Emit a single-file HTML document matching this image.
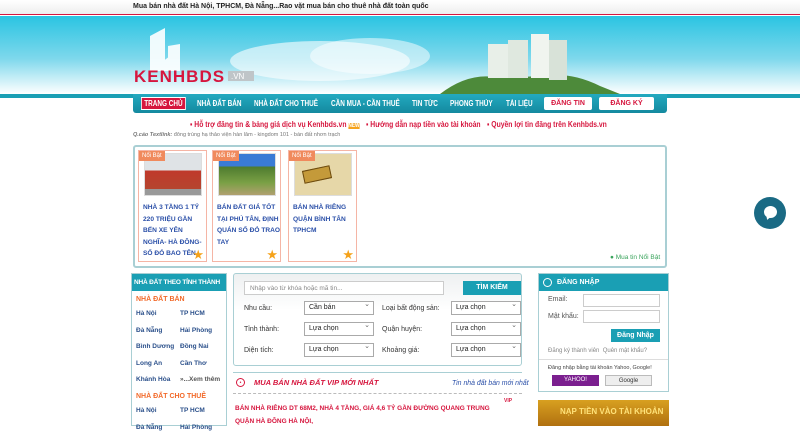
<!DOCTYPE html>
<html><head><meta charset="utf-8"><style>
*{margin:0;padding:0;box-sizing:border-box}
body{width:800px;height:426px;overflow:hidden;background:#fff;font-family:"Liberation Sans",sans-serif;position:relative}
.a{position:absolute}
.top{left:0;top:0;width:800px;height:15px;background:linear-gradient(#fff,#eee);border-bottom:1px solid #d6163e}
.top span{position:absolute;left:133px;top:3px;font-size:7px;color:#222;font-weight:bold}
.ban{left:0;top:16px;width:800px;height:78px;background:linear-gradient(#2ac4e2 0%,#7fd8ec 55%,#fff 100%)}
.line{left:0;top:94px;width:800px;height:4px;background:#1a9fb4}
.nav{left:133px;top:94px;width:534px;height:19px;background:linear-gradient(#23aac0,#14899f);border-radius:0 0 3px 3px}
.nav span{position:absolute;top:5px;font-size:8px;font-weight:bold;color:#fff;white-space:nowrap;transform:scaleX(.8);transform-origin:left}
.btn{position:absolute;top:3px;height:13px;background:#fff;border-radius:2px;color:#d6163e;font-size:7px;font-weight:bold;text-align:center;line-height:13px}
.lnk{top:119px;font-size:8.5px;color:#d6163e;font-weight:bold;white-space:nowrap;transform:scaleX(.8);transform-origin:left}
.card{position:absolute;top:150px;width:69px;height:112px;border:1px solid #f5b5a5;background:#fff}
.card .img{position:absolute;left:5px;top:2px;width:58px;height:43px;border:1px solid #ddd}
.card .tag{position:absolute;left:0;top:0;background:#f08a5d;color:#fff;font-size:6px;padding:2px 3px}
.card .t{position:absolute;left:4px;top:51px;font-size:6.6px;line-height:11.6px;color:#2a4fa8;font-weight:bold;white-space:nowrap}
.star{position:absolute;right:2px;bottom:0;color:#f5a21a;font-size:13px;line-height:13px}
.lab{font-size:7px;color:#333}
.sel{position:absolute;width:70px;height:14px;border:1px solid #aaa;background:#fff;font-size:7px;line-height:12px;padding-left:4px;color:#222}
.sel:after{content:"⌄";position:absolute;right:3px;top:-3px;color:#666;font-size:7px}
.side a{position:absolute;font-size:6.5px;color:#2a4f8a;font-weight:bold}
</style></head><body>
<div class="a top"><span>Mua bán nhà đất Hà Nội, TPHCM, Đà Nẵng...Rao vặt mua bán cho thuê nhà đất toàn quốc</span></div>
<div class="a ban">
<svg width="800" height="78" style="position:absolute;left:0;top:0">
<ellipse cx="320" cy="45" rx="90" ry="20" fill="#fff" opacity=".6"/>
<ellipse cx="370" cy="40" rx="60" ry="18" fill="#fff" opacity=".5"/>
<path d="M150 55 L150 20 L165 12 L165 55Z M168 55 L168 30 L180 28 L180 55Z M150 55 L170 40 L180 55Z" fill="#fff" opacity=".9"/>
<path d="M440 78 Q470 55 500 62 L540 60 Q570 55 600 70 L620 78Z" fill="#4d8a3a"/>
<rect x="488" y="28" width="20" height="34" fill="#e8efe8"/>
<rect x="508" y="24" width="20" height="38" fill="#dfe8df"/>
<rect x="531" y="18" width="18" height="44" fill="#f0f4ef"/>
<rect x="549" y="24" width="18" height="40" fill="#d8e2d8"/>
<text x="134" y="66" font-family="Liberation Sans" font-size="17" font-weight="bold" fill="#d6163e" letter-spacing="1">KENHBDS</text>
<rect x="228" y="55" width="26" height="10" fill="#bfc5c8"/>
<text x="231" y="63" font-family="Liberation Sans" font-size="8" fill="#fff">.VN</text>
</svg></div>
<div class="a line"></div>
<div class="a nav">
<span style="left:8px;top:3px;background:#d6163e;border:1px solid #fff;padding:1px 3px">TRANG CHỦ</span>
<span style="left:64px">NHÀ ĐẤT BÁN</span>
<span style="left:121px">NHÀ ĐẤT CHO THUÊ</span>
<span style="left:198px">CẦN MUA - CẦN THUÊ</span>
<span style="left:279px">TIN TỨC</span>
<span style="left:317px">PHONG THỦY</span>
<span style="left:373px">TÀI LIỆU</span>
<div class="btn" style="left:411px;width:48px">ĐĂNG TIN</div>
<div class="btn" style="left:466px;width:55px">ĐĂNG KÝ</div>
</div>
<div class="a lnk" style="left:190px">▪ Hỗ trợ đăng tin &amp; bảng giá dịch vụ Kenhbds.vn <span style="background:#f5a21a;color:#fff;font-size:6px">NEW</span></div>
<div class="a lnk" style="left:366px">▪ Hướng dẫn nạp tiền vào tài khoản</div>
<div class="a lnk" style="left:487px">▪ Quyền lợi tin đăng trên Kenhbds.vn</div>
<div class="a" style="left:133px;top:132px;font-size:5.5px;color:#777"><b><i>Q.cáo Textlink:</i></b> đông trùng hạ thảo viện hàn lâm - kingdom 101 - bán đất nhơn trạch</div>
<div class="a" style="left:133px;top:145px;width:534px;height:123px;border:2px solid #a9cfd4;border-radius:3px"></div>
<div class="card" style="left:138px"><div class="img" style="background:linear-gradient(#dfe3e6 40%,#c0392b 40%,#b5452f 85%,#999 85%)"></div><div class="tag">Nổi Bật</div><div class="t">NHÀ 3 TẦNG 1 TỶ<br>220 TRIỆU GẦN<br>BẾN XE YÊN<br>NGHĨA- HÀ ĐÔNG-<br>SỔ ĐỎ BAO TÊN</div><div class="star">★</div></div>
<div class="card" style="left:212px"><div class="img" style="background:linear-gradient(#3a7bd5 30%,#4d7a2e 30%,#7aa045 70%,#b0a070)"></div><div class="tag">Nổi Bật</div><div class="t">BÁN ĐẤT GIÁ TỐT<br>TẠI PHÚ TÂN, ĐỊNH<br>QUÁN SỔ ĐỎ TRAO<br>TAY</div><div class="star">★</div></div>
<div class="card" style="left:288px"><div class="img" style="background:#e6d7a8"><div style="position:absolute;left:8px;top:14px;width:28px;height:13px;background:#c49a3a;border:1px solid #6b4a10;transform:rotate(-12deg)"></div></div><div class="tag">Nổi Bật</div><div class="t">BÁN NHÀ RIÊNG<br>QUẬN BÌNH TÂN<br>TPHCM</div><div class="star">★</div></div>
<div class="a" style="left:610px;top:254px;font-size:6.5px;color:#3aa45c">● Mua tin Nổi Bật</div>
<div class="a side" style="left:131px;top:273px;width:96px;height:153px;border:1px solid #a9cfd4">
<div style="background:#1a9fb4;height:17px;color:#fff;font-size:6.5px;font-weight:bold;padding:5px 2px;white-space:nowrap;letter-spacing:-.2px">NHÀ ĐẤT THEO TỈNH THÀNH</div>
<div style="position:absolute;left:4px;top:22px;font-size:7px;color:#f26a2a;font-weight:bold">NHÀ ĐẤT BÁN</div>
<a style="left:4px;top:36px">Hà Nội</a><a style="left:48px;top:36px">TP HCM</a>
<a style="left:4px;top:53px">Đà Nẵng</a><a style="left:48px;top:53px">Hải Phòng</a>
<a style="left:4px;top:69px">Bình Dương</a><a style="left:48px;top:69px">Đồng Nai</a>
<a style="left:4px;top:86px">Long An</a><a style="left:48px;top:86px">Cần Thơ</a>
<a style="left:4px;top:102px">Khánh Hòa</a><a style="left:48px;top:102px;color:#555">»...Xem thêm</a>
<div style="position:absolute;left:4px;top:119px;font-size:7px;color:#f26a2a;font-weight:bold">NHÀ ĐẤT CHO THUÊ</div>
<a style="left:4px;top:133px">Hà Nội</a><a style="left:48px;top:133px">TP HCM</a>
<a style="left:4px;top:150px">Đà Nẵng</a><a style="left:48px;top:150px">Hải Phòng</a>
</div>
<div class="a" style="left:233px;top:273px;width:289px;height:93px;border:1px solid #a9cfd4;border-radius:3px;background:linear-gradient(#eef0f1,#fff 40%)">
<div style="position:absolute;left:10px;top:7px;width:200px;height:14px;border:1px solid #ccc;background:#fff;font-size:6.5px;color:#888;padding:3px 5px">Nhập vào từ khóa hoặc mã tin...</div>
<div style="position:absolute;left:229px;top:7px;width:58px;height:14px;background:#1a9fb4;color:#fff;font-size:7px;font-weight:bold;text-align:center;line-height:14px">TÌM KIẾM</div>
<div class="a lab" style="left:10px;top:31px">Nhu cầu:</div><div class="sel" style="left:70px;top:27px">Cần bán</div>
<div class="a lab" style="left:148px;top:31px">Loại bất động sản:</div><div class="sel" style="left:217px;top:27px">Lựa chọn</div>
<div class="a lab" style="left:10px;top:52px">Tỉnh thành:</div><div class="sel" style="left:70px;top:48px">Lựa chọn</div>
<div class="a lab" style="left:148px;top:52px">Quận huyện:</div><div class="sel" style="left:217px;top:48px">Lựa chọn</div>
<div class="a lab" style="left:10px;top:73px">Diện tích:</div><div class="sel" style="left:70px;top:69px">Lựa chọn</div>
<div class="a lab" style="left:148px;top:73px">Khoảng giá:</div><div class="sel" style="left:217px;top:69px">Lựa chọn</div>
</div>
<div class="a" style="left:233px;top:372px;width:289px;border-top:1px solid #a9cfd4"></div>
<div class="a" style="left:236px;top:378px;width:9px;height:9px;border:1px solid #d6163e;border-radius:50%;font-size:5px;color:#d6163e;text-align:center;line-height:8px">•</div>
<div class="a" style="left:254px;top:378px;font-size:7.5px;color:#d6163e;font-weight:bold;font-style:italic">MUA BÁN NHÀ ĐẤT VIP MỚI NHẤT</div>
<div class="a" style="left:452px;top:378px;font-size:7.5px;color:#2a4fa8;font-style:italic;white-space:nowrap;transform:scaleX(.92);transform-origin:left">Tin nhà đất bán mới nhất</div>
<div class="a" style="left:233px;top:393px;width:289px;border-top:1px dashed #bbb"></div>
<div class="a" style="left:235px;top:402px;width:275px;font-size:6.5px;line-height:13px;color:#d6163e;font-weight:bold">BÁN NHÀ RIÊNG DT 68M2, NHÀ 4 TẦNG, GIÁ 4,6 TỶ GẦN ĐƯỜNG QUANG TRUNG QUẬN HÀ ĐÔNG HÀ NỘI,</div>
<div class="a" style="left:504px;top:398px;font-size:5px;color:#d6163e;font-weight:bold">VIP</div>
<div class="a" style="left:538px;top:273px;width:131px;height:119px;border:1px solid #a9cfd4">
<div style="background:#1a9fb4;height:17px;color:#fff;font-size:7px;font-weight:bold;padding:5px 0 0 18px">ĐĂNG NHẬP</div>
<div style="position:absolute;left:4px;top:4px;width:9px;height:9px;border-radius:50%;border:1px solid #fff"></div>
<div class="a lab" style="left:9px;top:22px;color:#555">Email:</div>
<div class="a" style="left:44px;top:20px;width:77px;height:13px;border:1px solid #ccc"></div>
<div class="a lab" style="left:9px;top:39px;color:#555">Mật khẩu:</div>
<div class="a" style="left:44px;top:36px;width:77px;height:13px;border:1px solid #ccc"></div>
<div class="a" style="left:72px;top:55px;width:49px;height:13px;background:#1a9fb4;color:#fff;font-size:7px;font-weight:bold;text-align:center;line-height:13px">Đăng Nhập</div>
<div class="a" style="left:9px;top:74px;font-size:6px;color:#888">Đăng ký thành viên &nbsp;Quên mật khẩu?</div>
<div class="a" style="left:0;top:85px;width:129px;border-top:1px solid #ddd"></div>
<div class="a" style="left:9px;top:91px;font-size:5.5px;color:#444">Đăng nhập bằng tài khoản Yahoo, Google!</div>
<div class="a" style="left:13px;top:101px;width:47px;height:11px;background:#7b1f8f;color:#fff;font-size:6px;text-align:center;line-height:11px">YAHOO!</div>
<div class="a" style="left:66px;top:101px;width:47px;height:11px;background:#eee;border:1px solid #bbb;color:#333;font-size:6px;text-align:center;line-height:10px">Google</div>
</div>
<div class="a" style="left:538px;top:400px;width:131px;height:26px;background:linear-gradient(#d8a020,#b07010);color:#ffe27a;font-size:8px;font-weight:bold;padding:7px 0 0 22px;white-space:nowrap">NẠP TIỀN VÀO TÀI KHOẢN</div>
<div class="a" style="left:754px;top:197px;width:32px;height:32px;border-radius:50%;background:#1a6a84"><div style="position:absolute;left:10px;top:9px;width:13px;height:12px;border-radius:50%;background:#fff"></div><div style="position:absolute;left:11px;top:18px;width:0;height:0;border-left:3px solid transparent;border-right:3px solid transparent;border-top:5px solid #fff;transform:rotate(20deg)"></div></div>
</body></html>
